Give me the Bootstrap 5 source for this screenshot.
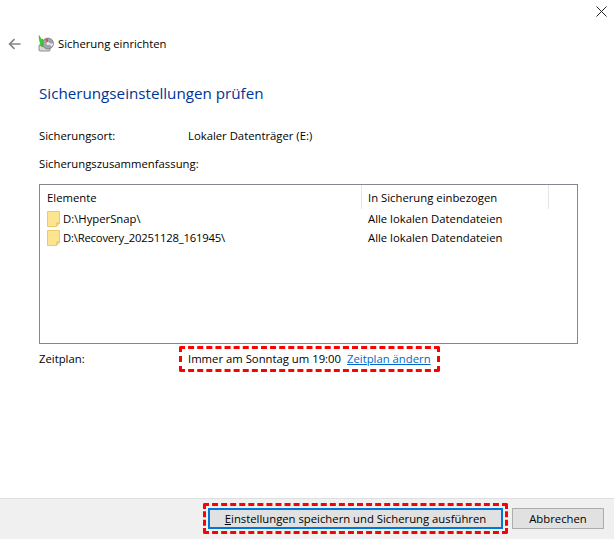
<!DOCTYPE html>
<html lang="de">
<head>
<meta charset="utf-8">
<title>Sicherung einrichten</title>
<link rel="stylesheet" href="https://cdn.jsdelivr.net/npm/bootstrap@5.3.0/dist/css/bootstrap.min.css">
<style>
html,body{height:100%;}
body{width:614px;height:539px;overflow:hidden;font-family:"Open Sans","Noto Sans",sans-serif;font-size:11.3px;line-height:16px;color:#000;background:#fff;}
.wiz{height:539px;}
.topclose{height:36px;padding:2px 7px 0 0;}
.titlebar{height:16px;padding-left:8px;}
.backbtn{width:29px;}
.wiz-icon{margin-right:3px;}
.content{padding:0 36px 0 39px;}
.heading{font-size:15.2px;line-height:22px;color:#003399;margin:30px 0 0;font-weight:400;}
.inforow{margin-top:24px;}
.lab1{width:149px;}
.summary{margin-top:12px;}
.listbox{margin-top:12px;height:160px;border:1px solid #828790;}
.lhead{height:24px;}
.cola{width:321px;padding:5px 0 0 7px;}
.colb{width:188px;padding:5px 0 0 6px;border-left:1px solid #e5e5e5;border-right:1px solid #e5e5e5;}
.lrow{height:19px;}
.foldername{margin-left:1px;}
.tightname{letter-spacing:-.2px;}
.folderic{margin:0 2px 0 7px;flex:none;}
.colrow{width:321px;}
.colrow2{padding-left:7px;}
.planrow{margin-top:2px;}
.lab2{width:140px;}
.redbox{border:3px dashed #f00;border-radius:2px;padding:2px 6px;height:26px;}
.planlink{color:#0066cc;margin-left:6px;}
.footer-bar{height:41px;background:#f0f0f0;border-top:1px solid #dfdfdf;padding:4px 10px 0 0;}
.redbox2{border:3px dashed #f00;border-radius:2px;padding:2px;height:31px;}
.btnwin{font-size:11.3px;line-height:15px;color:#000;background:#e1e1e1;border:1px solid #adadad;border-radius:0;height:21px;padding:0;}
.btnmain{width:295px;border:2px solid #0078d7;}
.btncancel{width:92px;margin:5px 0 0 4px;}
</style>
</head>
<body>
<div class="wiz d-flex flex-column">
  <div class="topclose d-flex justify-content-end">
    <svg width="11" height="11" viewBox="0 0 11 11" class="mt-1"><path d="M.5.5l10 10M10.500.5l-10 10" stroke="#222" stroke-width="1" fill="none"/></svg>
  </div>
  <div class="titlebar d-flex align-items-center">
    <div class="backbtn d-flex">
      <svg width="13" height="12" viewBox="0 0 13 12"><path d="M12.500 6H2M6.500 1.200L1.600 6l4.900 4.800" stroke="#858585" stroke-width="1.700" fill="none"/></svg>
    </div>
    <svg class="wiz-icon" width="18" height="18" viewBox="0 0 18 18">
      <rect x="2" y="10" width="11" height="6" rx="1" fill="#d8d8d8" stroke="#777" stroke-width=".8"/>
      <circle cx="11" cy="8.500" r="5.500" fill="#a3a3ad" stroke="#666" stroke-width=".6"/>
      <path d="M11 8.500L8 4.500a5 5 0 0 1 3-1z" fill="#d9534f"/>
      <path d="M11 8.500l4 3a5 5 0 0 0 1-3z" fill="#e8ecf2"/>
      <circle cx="11" cy="8.500" r="1.500" fill="#f2f2f2"/>
      <path d="M2 .5l2.500 4 1.500-.4L5.500 12 2.600 9.800l1-.8C2.600 6.500 2 3.500 2 .5z" fill="#3ecf2c" stroke="#1f8a18" stroke-width=".4"/>
    </svg>
    <span>Sicherung einrichten</span>
  </div>
  <div class="content flex-grow-1">
    <h1 class="heading">Sicherungseinstellungen prüfen</h1>
    <div class="inforow d-flex"><div class="lab1">Sicherungsort:</div><div>Lokaler Datenträger (E:)</div></div>
    <div class="summary">Sicherungszusammenfassung:</div>
    <div class="listbox">
      <div class="lhead d-flex"><div class="cola">Elemente</div><div class="colb">In Sicherung einbezogen</div></div>
      <div class="lrow d-flex align-items-center">
        <div class="colrow d-flex align-items-center">
          <svg class="folderic" width="13" height="16" viewBox="0 0 13 16"><path d="M.5.500h12v12l-3 3H.5z" fill="#fde48f" stroke="#ecca6c"/><path d="M10 15v-3h2.500" fill="#fff6d5" stroke="#d8b558"/></svg>
          <span class="foldername">D:\HyperSnap\</span>
        </div>
        <div class="colrow2">Alle lokalen Datendateien</div>
      </div>
      <div class="lrow d-flex align-items-center">
        <div class="colrow d-flex align-items-center">
          <svg class="folderic" width="13" height="16" viewBox="0 0 13 16"><path d="M.5.500h12v12l-3 3H.5z" fill="#fde48f" stroke="#ecca6c"/><path d="M10 15v-3h2.500" fill="#fff6d5" stroke="#d8b558"/></svg>
          <span class="foldername tightname">D:\Recovery_20251128_161945\</span>
        </div>
        <div class="colrow2">Alle lokalen Datendateien</div>
      </div>
    </div>
    <div class="planrow d-flex align-items-center">
      <div class="lab2">Zeitplan:</div>
      <div class="redbox d-inline-flex align-items-center"><span>Immer am Sonntag um 19:00</span><a href="#" class="planlink">Zeitplan ändern</a></div>
    </div>
  </div>
  <div class="footer-bar d-flex justify-content-end align-items-start">
    <div class="redbox2"><button type="button" class="btn btnwin btnmain d-block"><u>E</u>instellungen speichern und Sicherung ausführen</button></div>
    <button type="button" class="btn btnwin btncancel">Abbrechen</button>
  </div>
</div>
</body>
</html>
